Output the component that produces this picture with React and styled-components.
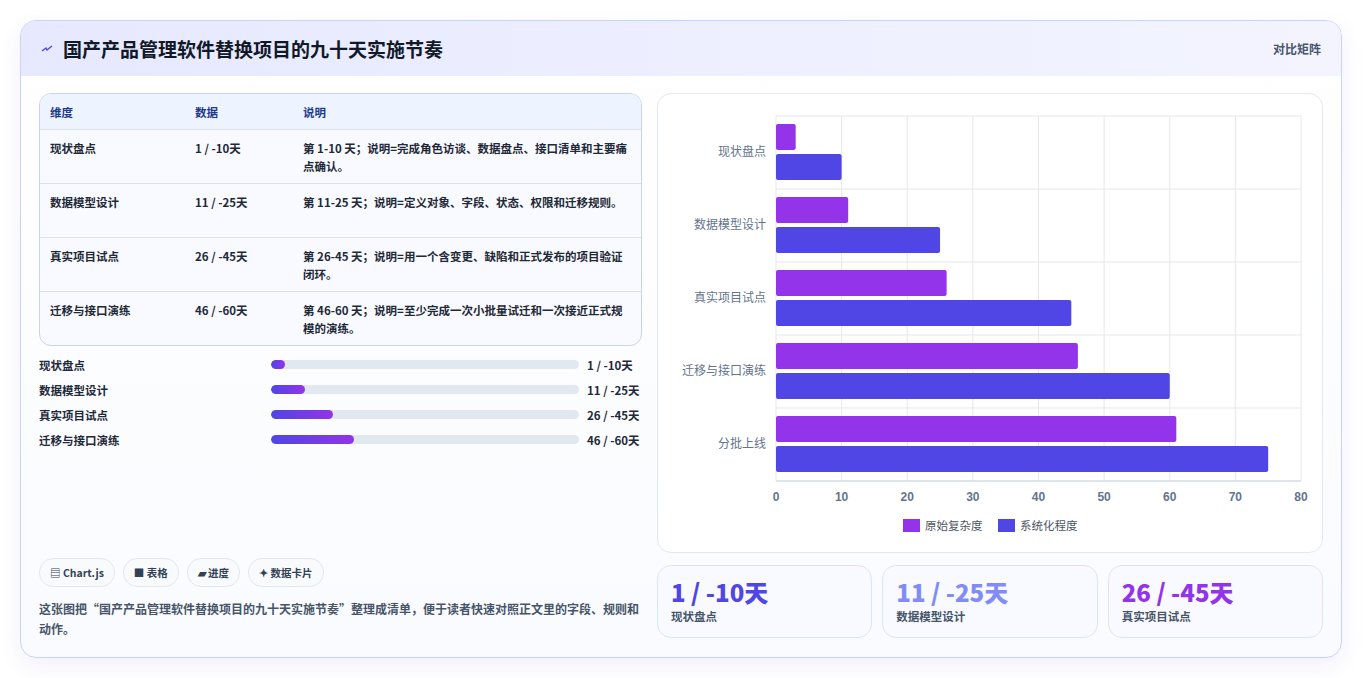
import styled, { createGlobalStyle } from 'styled-components';

const Global = createGlobalStyle`
  body { margin: 0; background: #fff; font-family: "Noto Sans CJK SC", "Noto Sans", sans-serif; color: #1e293b; }
`;

const Page = styled.div`
  padding: 20px 20px 20px 20px;
  height: 678px;
  box-sizing: border-box;
`;

const Card = styled.div`
  width: 1322px;
  height: 638px;
  box-sizing: border-box;
  border: 1px solid #c7d2fe;
  border-radius: 16px;
  background: linear-gradient(180deg, #ffffff 0%, #fafbff 100%);
  box-shadow: 0 8px 24px rgba(79, 70, 229, 0.08);
  overflow: hidden;
  display: flex;
  flex-direction: column;
`;

const Header = styled.div`
  height: 55px;
  flex: none;
  display: flex;
  align-items: center;
  justify-content: space-between;
  padding: 0 20px 0 20px;
  background: linear-gradient(90deg, #e6e9ff 0%, #eef0ff 60%, #f3f4ff 100%);
`;

const Title = styled.h1`
  margin: 0;
  font-size: 19px;
  font-weight: 700;
  color: #111827;
  display: flex;
  align-items: center;
  gap: 10px;
`;

const HeaderLink = styled.span`
  font-size: 12px;
  color: #475569;
  font-weight: 600;
`;

const Body = styled.div`
  flex: 1;
  display: grid;
  grid-template-columns: 603px 666px;
  gap: 15px;
  padding: 17px 18px 18px 18px;
`;

const Left = styled.div`
  display: flex;
  flex-direction: column;
`;

const Table = styled.div`
  border: 1px solid #cbd5e1;
  border-radius: 12px;
  overflow: hidden;
  background: #f8faff;
`;

const Row = styled.div`
  display: grid;
  grid-template-columns: 145px 108px 1fr;
  padding: ${p => (p.$head ? '9px 10px 8px' : '9px 10px 8px')};
  min-height: ${p => (p.$head ? '16px' : '36px')};
  border-top: ${p => (p.$head ? 'none' : '1px solid #dbe3ee')};
  background: ${p => (p.$head ? '#eef4ff' : 'transparent')};
  font-size: 11.5px;
  line-height: 18px;
  font-weight: ${p => (p.$head ? 700 : 600)};
  color: ${p => (p.$head ? '#1e3a8a' : '#1f2937')};
`;

const Progress = styled.div`
  display: flex;
  flex-direction: column;
  gap: 6px;
  margin-top: 9px;
`;

const PRow = styled.div`
  display: grid;
  grid-template-columns: 224px 308px 1fr;
  gap: 8px;
  align-items: center;
  font-size: 11.5px;
  font-weight: 600;
  height: 19px;
`;

const Track = styled.div`
  height: 9px;
  border-radius: 5px;
  background: #e2e8f0;
  overflow: hidden;
`;

const Fill = styled.div`
  height: 100%;
  border-radius: 5px;
  background: linear-gradient(90deg, #4f46e5, #9333ea);
`;

const Chips = styled.div`
  margin-top: auto;
  display: flex;
  gap: 8px;
`;

const Chip = styled.span`
  height: 27px;
  padding: 0 10px;
  border: 1px solid #e2e8f0;
  border-radius: 14px;
  background: #f8fafc;
  display: inline-flex;
  align-items: center;
  font-size: 10.5px;
  font-weight: 700;
  color: #334155;
`;

const Note = styled.p`
  margin: 12px 0 0;
  font-size: 12px;
  line-height: 20px;
  color: #475569;
  font-weight: 600;
`;

const Right = styled.div`
  display: flex;
  flex-direction: column;
  gap: 12px;
`;

const ChartBox = styled.div`
  height: 460px;
  box-sizing: border-box;
  border: 1px solid #e2e8f0;
  border-radius: 14px;
  background: #fff;
`;

const Stats = styled.div`
  display: grid;
  grid-template-columns: repeat(3, 1fr);
  gap: 10px;
`;

const Stat = styled.div`
  height: 73px;
  box-sizing: border-box;
  border: 1px solid #dbe6f5;
  border-radius: 14px;
  background: #f8faff;
  padding: 10px 13px;
`;

const StatValue = styled.div`
  font-size: 24px;
  font-weight: 800;
  line-height: 32px;
  color: ${p => p.$color};
`;

const StatLabel = styled.div`
  font-size: 11.5px;
  font-weight: 600;
  color: #475569;
`;

const rows = [
  ['现状盘点', '1 / -10天', '第 1-10 天；说明=完成角色访谈、数据盘点、接口清单和主要痛点确认。', 4.5],
  ['数据模型设计', '11 / -25天', '第 11-25 天；说明=定义对象、字段、状态、权限和迁移规则。', 11],
  ['真实项目试点', '26 / -45天', '第 26-45 天；说明=用一个含变更、缺陷和正式发布的项目验证闭环。', 20],
  ['迁移与接口演练', '46 / -60天', '第 46-60 天；说明=至少完成一次小批量试迁和一次接近正式规模的演练。', 27],
];

const bars = [
  ['现状盘点', 3, 10],
  ['数据模型设计', 11, 25],
  ['真实项目试点', 26, 45],
  ['迁移与接口演练', 46, 60],
  ['分批上线', 61, 75],
];

function Chart() {
  const x0 = 118, w = 525, top = 22, band = 73;
  const sx = v => x0 + (v / 80) * w;
  return (
    <svg width="664" height="458" style={{ fontFamily: '"Noto Sans CJK SC", sans-serif' }}>
      {Array.from({ length: 9 }, (_, i) => (
        <g key={i}>
          <line x1={sx(i * 10)} x2={sx(i * 10)} y1={top} y2={top + band * 5} stroke="#e5e7eb" />
          <text x={sx(i * 10)} y={top + band * 5 + 20} fontSize="12" fill="#64748b" textAnchor="middle" fontWeight="600" fontFamily="Liberation Sans, sans-serif">{i * 10}</text>
        </g>
      ))}
      {Array.from({ length: 6 }, (_, i) => (
        <line key={i} x1={x0} x2={x0 + w} y1={top + band * i} y2={top + band * i} stroke="#e5e7eb" />
      ))}
      <line x1={x0} x2={x0 + w} y1={top + band * 5} y2={top + band * 5} stroke="#cbd5e1" />
      {bars.map(([l, a, b], i) => {
        const y = top + band * i;
        return (
          <g key={l}>
            <text x={x0 - 10} y={y + 40} fontSize="12" fill="#64748b" textAnchor="end">{l}</text>
            <rect x={x0} y={y + 8} width={sx(a) - x0} height={26} rx="2" fill="#9333ea" />
            <rect x={x0} y={y + 38} width={sx(b) - x0} height={26} rx="2" fill="#4f46e5" />
          </g>
        );
      })}
      <rect x="245" y="425" width="17" height="13" fill="#9333ea" />
      <text x="267" y="436" fontSize="11.5" fill="#4b5563">原始复杂度</text>
      <rect x="340" y="425" width="17" height="13" fill="#4f46e5" />
      <text x="362" y="436" fontSize="11.5" fill="#4b5563">系统化程度</text>
    </svg>
  );
}

export default function App() {
  return (
    <Page>
      <Global />
      <Card>
        <Header>
          <Title>
            <svg width="12" height="12" viewBox="0 0 12 12"><path d="M1 8 L5 5 L6 7 L11 3" stroke="#4f46e5" strokeWidth="1.4" fill="none" /></svg>
            国产产品管理软件替换项目的九十天实施节奏
          </Title>
          <HeaderLink>对比矩阵</HeaderLink>
        </Header>
        <Body>
          <Left>
            <Table>
              <Row $head><span>维度</span><span>数据</span><span>说明</span></Row>
              {rows.map(r => (
                <Row key={r[0]}><span>{r[0]}</span><span>{r[1]}</span><span>{r[2]}</span></Row>
              ))}
            </Table>
            <Progress>
              {rows.map(r => (
                <PRow key={r[0]}>
                  <span>{r[0]}</span>
                  <Track><Fill style={{ width: `${r[3]}%` }} /></Track>
                  <span style={{ fontWeight: 700 }}>{r[1]}</span>
                </PRow>
              ))}
            </Progress>
            <Chips>
              <Chip>▤ Chart.js</Chip>
              <Chip>■ 表格</Chip>
              <Chip>▰ 进度</Chip>
              <Chip>✦ 数据卡片</Chip>
            </Chips>
            <Note>这张图把“国产产品管理软件替换项目的九十天实施节奏”整理成清单，便于读者快速对照正文里的字段、规则和动作。</Note>
          </Left>
          <Right>
            <ChartBox><Chart /></ChartBox>
            <Stats>
              <Stat><StatValue $color="#4f46e5">1 / -10天</StatValue><StatLabel>现状盘点</StatLabel></Stat>
              <Stat><StatValue $color="#818cf8">11 / -25天</StatValue><StatLabel>数据模型设计</StatLabel></Stat>
              <Stat><StatValue $color="#9333ea">26 / -45天</StatValue><StatLabel>真实项目试点</StatLabel></Stat>
            </Stats>
          </Right>
        </Body>
      </Card>
    </Page>
  );
}
